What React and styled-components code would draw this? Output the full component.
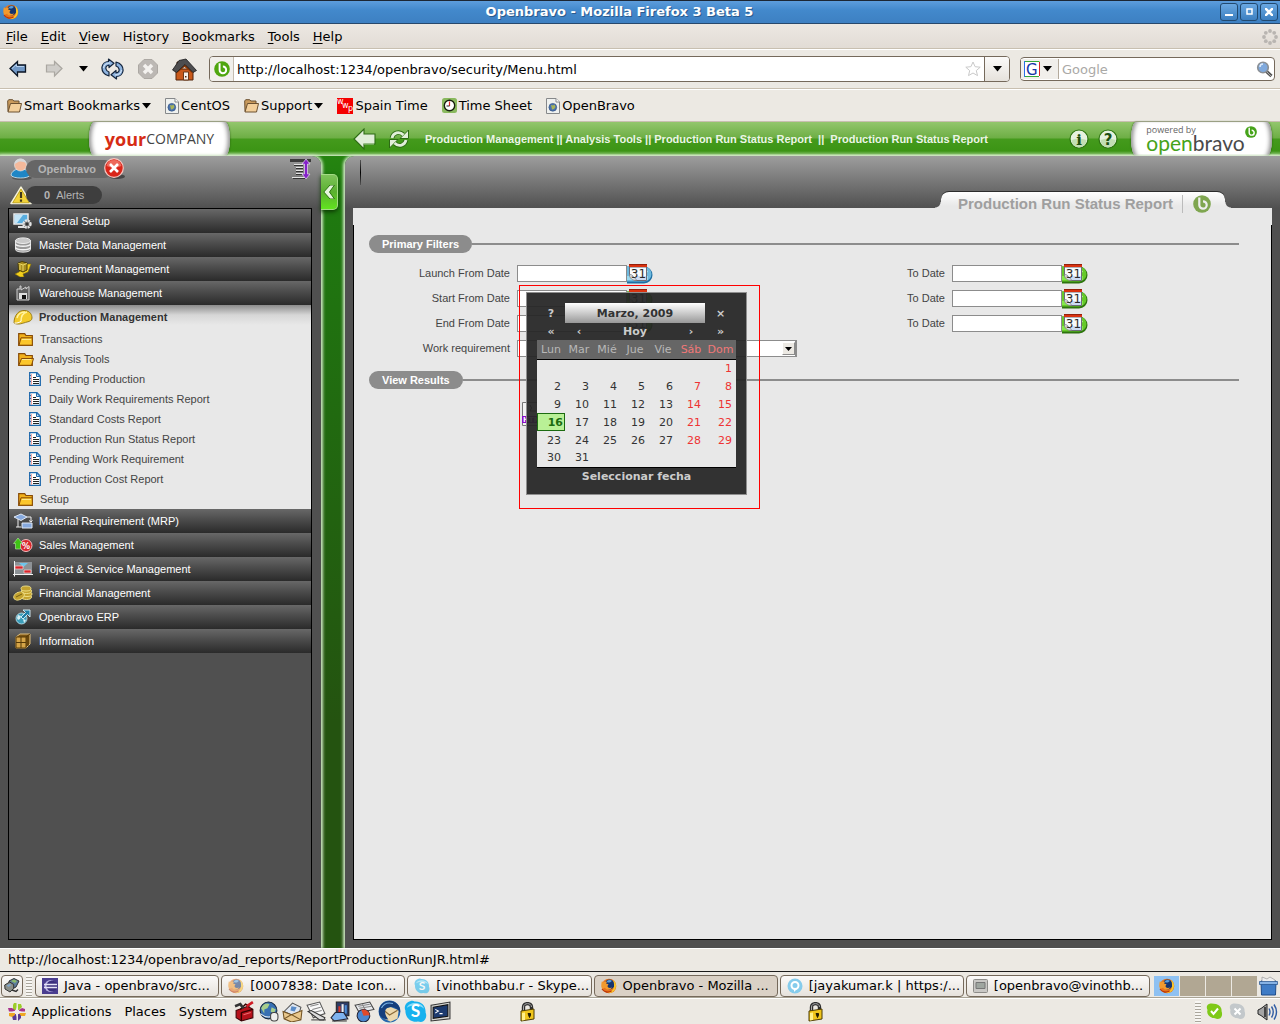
import React from "react";
import styled, { createGlobalStyle } from "styled-components";

const primaryRows = [
  { id: "launch", label: "Launch From Date", focused: true },
  { id: "start", label: "Start From Date" },
  { id: "end", label: "End From Date" },
];

const weekDays = ["Lun", "Mar", "Mié", "Jue", "Vie", "Sáb", "Dom"];
const weeks = [
  ["", "", "", "", "", "", 1],
  [2, 3, 4, 5, 6, 7, 8],
  [9, 10, 11, 12, 13, 14, 15],
  [16, 17, 18, 19, 20, 21, 22],
  [23, 24, 25, 26, 27, 28, 29],
  [30, 31, "", "", "", "", ""],
];

/* ---------- icons ---------- */

const Svg = styled.svg`
  display: block;
  flex: none;
`;

const Caret = () => (
  <Svg width="9" height="6" viewBox="0 0 9 6">
    <path d="M0 0h9L4.500 5.500z" fill="#000" />
  </Svg>
);

const Firefox = ({ size = 16, faded }) => (
  <Svg width={size} height={size} viewBox="0 0 16 16" opacity={faded ? 0.55 : 1}>
    <circle cx="8" cy="8" r="7.300" fill="#e8731a" />
    <circle cx="8.500" cy="6.500" r="5" fill="#16356f" />
    <path d="M6 3c2-1.500 4-1 5 0-1 .2-1 1.500-2.500 1.500S6 5 6 3z" fill="#5aa0dc" />
    <path d="M1 3c.4 1 1 1.200 1.600 1.300C3.500 3.400 5 3.300 6 4L5 5.500l2.500.8L6.500 8c0 2 3 2.500 4.500 1.200-1 3-5.500 3.200-7 .5L1 11C0 8 .2 5 1 3z" fill="#f29a2e" />
    <path d="M12 2c3 2 4 6 2 9.500-1.500 3-5 4-8.500 3 5 0 8-3.500 7.500-7.500 0-2-.4-3.500-1-5z" fill="#f8c62c" />
    <path d="M1 11c2 3 6 4 9.500 2" stroke="#b8350c" strokeWidth="1.200" fill="none" />
  </Svg>
);

const BackArrow = () => (
  <Svg width="18" height="18" viewBox="0 0 18 18">
    <path d="M1 8.500L8.500 1.500V5H16.500V12H8.500v4z" fill="#7198c6" stroke="#0b1524" strokeWidth="1.300" />
    <path d="M3 8.500L7.500 4.500V6.500H15" fill="none" stroke="#b5cfec" />
  </Svg>
);

const ForwardArrow = () => (
  <Svg width="18" height="18" viewBox="0 0 18 18">
    <path d="M17 8.500L9.500 1.500V5H1.500V12h8v4z" fill="#cfcdc9" stroke="#aaa7a1" strokeWidth="1.200" />
  </Svg>
);

const Reload = () => (
  <Svg width="23" height="22" viewBox="0 0 23 22">
    <g fill="#8fb4df" stroke="#14253d" strokeWidth="1.200" strokeLinejoin="round">
      <path d="M8 18C3 17 .5 13 1 9c.4-3 3-5.500 6.500-5.500V1L13 5.200 8 9.500V7C5.500 7.500 4.500 9 5 11c.3 1.500 1.500 2.500 3 3z" />
      <path d="M15 4c5 1 7.500 5 7 9-.4 3-3 5.500-6.500 5.500V21L10 16.800 15 12.500V15c2.500-.5 3.500-2 3-4-.3-1.500-1.500-2.500-3-3z" />
    </g>
    <path d="M2.500 10C3 7 5 5 9 5M20.500 12c-.5 3-2.500 5-6.500 5" stroke="#dbe9f7" fill="none" />
  </Svg>
);

const Stop = () => (
  <Svg width="20" height="20" viewBox="0 0 20 20">
    <path d="M6 .5h8L19.500 6v8L14 19.500H6L.5 14V6z" fill="#bcb8b4" stroke="#aca8a3" />
    <path d="M6 6l8 8M14 6l-8 8" stroke="#f4f2ef" strokeWidth="3.500" />
  </Svg>
);

const Home = () => (
  <Svg width="25" height="23" viewBox="0 0 25 23">
    <path d="M4 11h17v11H4z" fill="#c9591a" stroke="#53240a" />
    <path d="M12.500 5L20 12v3l-7.500-6L5 15v-3z" fill="#8c3806" />
    <path d="M5 4h4v5H5z" fill="#a94b18" stroke="#41200c" />
    <path d="M7 2.500L14 1l10.500 11.500-3.500 2-8-8-8.500 8-4-2.500z" fill="#4d4d4f" stroke="#1c1c1d" strokeWidth=".8" />
    <path d="M11.500 14h5v8h-5z" fill="#f6f2ea" stroke="#6b3a1a" />
    <path d="M13 18h1.500v1.500H13z" fill="#53240a" />
  </Svg>
);

const BravoMark = ({ size = 18, color = "#4fa60f", hole = "#fff" }) => (
  <Svg width={size} height={size} viewBox="0 0 18 18">
    <circle cx="9" cy="9" r="8.800" fill={color} />
    <path d="M6.300 2.500v7.500a3.700 3.700 0 103.700-3.700" fill="none" stroke={hole} strokeWidth="2.200" />
  </Svg>
);

const StarIcon = () => (
  <Svg width="16" height="16" viewBox="0 0 16 16">
    <path d="M8 1l2.100 4.700 5.100.5-3.900 3.400 1.200 5L8 12l-4.500 2.600 1.200-5L.8 6.200l5.100-.5z" fill="#fff" stroke="#c9c9c9" />
  </Svg>
);

const Magnifier = () => (
  <Svg width="17" height="17" viewBox="0 0 17 17">
    <path d="M10 10l5.500 5" stroke="#555" strokeWidth="3.200" />
    <path d="M11 11l4 4" stroke="#aaa" strokeWidth="1" />
    <circle cx="7" cy="6.500" r="5.300" fill="#7fa9dd" stroke="#8b8f94" strokeWidth="1.600" />
    <path d="M4 6a3 3 0 013-3" stroke="#dceafa" strokeWidth="1.500" fill="none" />
  </Svg>
);

const GoogleG = () => (
  <Svg width="16" height="16" viewBox="0 0 16 16">
    <path d="M0 0h16v16H0z" fill="#fff" />
    <path d="M.5 0v16" stroke="#2a6fe8" />
    <path d="M1 .5h14.500M1 15.500h14" stroke="#35a83a" />
    <path d="M15.500 1v14" stroke="#d8242a" />
    <text x="2" y="13.500" fontFamily="DejaVu Sans" fontSize="15" fill="#1433a8">G</text>
  </Svg>
);

const Throbber = () => (
  <Svg width="16" height="16" viewBox="0 0 16 16" fill="#b9b5b1">
    {[[8, 2], [12.2, 3.8], [14, 8], [12.2, 12.2], [8, 14], [3.8, 12.2], [2, 8], [3.8, 3.8]].map(([x, y]) => (
      <circle key={`${x}-${y}`} cx={x} cy={y} r="1.900" />
    ))}
  </Svg>
);

const MarkFolder = () => (
  <Svg width="15" height="14" viewBox="0 0 15 14">
    <path d="M1 12.500L.7 2l1-1.300h4L6.800 2H12v3" fill="#c99a5c" stroke="#6b5030" />
    <path d="M1 13L3.500 4.500h11L12.500 13z" fill="#f3cf9a" stroke="#6b5030" strokeLinejoin="round" />
  </Svg>
);

const WebPage = () => (
  <Svg width="14" height="16" viewBox="0 0 14 16">
    <path d="M.5.5h9.500l3.500 3.500v11.500H.5z" fill="#eff1ef" stroke="#86888a" />
    <path d="M10 .5V4h3.500" fill="#fff" stroke="#86888a" />
    <circle cx="6.800" cy="9.300" r="3.900" fill="#4a72ad" stroke="#2e4c7c" strokeWidth=".6" />
    <path d="M5 7l2 .5 1.500-1 1 2.500-1.500 2-2 .5z" fill="#a9b458" />
  </Svg>
);

const SpainTime = () => (
  <Svg width="16" height="16" viewBox="0 0 16 16">
    <path d="M0 0h16v16H0z" fill="#f40000" />
    <g fill="#fff" fontFamily="DejaVu Sans" fontSize="8">
      <text x="0" y="6">w</text>
      <text x="5" y="10">w</text>
      <text x="11" y="13">p</text>
    </g>
  </Svg>
);

const ClockIcon = () => (
  <Svg width="15" height="15" viewBox="0 0 15 15">
    <rect width="15" height="15" rx="2.500" fill="#8ab95e" />
    <circle cx="7.500" cy="7.500" r="5.200" fill="#fff" stroke="#18200f" strokeWidth="1.400" />
    <path d="M7.500 3.500V8" stroke="#e02c2c" strokeWidth="1.200" />
    <path d="M4.500 8h3" stroke="#222" />
  </Svg>
);

const AppBack = () => (
  <Svg width="23" height="22" viewBox="0 0 23 22">
    <path d="M1 11L11 1v5h11v10H11v5z" fill="#e1eed9" stroke="#2d6b14" strokeWidth="1.100" />
    <path d="M11 16h10" stroke="#a9cf97" />
  </Svg>
);

const AppRefresh = () => (
  <Svg width="20" height="20" viewBox="0 0 20 20">
    <g fill="none" stroke="#2d6b14" strokeWidth="4.600">
      <path d="M3 9C4 4 10 1.500 14 5.500" />
      <path d="M17 11c-1 5-7 7.500-11 3.500" />
    </g>
    <path d="M11 9.500h8.500V1zM9 10.500H.5V19z" fill="#e1eed9" stroke="#2d6b14" />
    <g fill="none" stroke="#e1eed9" strokeWidth="2.800">
      <path d="M3 9C4 4 10 1.500 14.500 6" />
      <path d="M17 11c-1 5-7 7.500-11.500 3" />
    </g>
  </Svg>
);

const RoundGlyph = ({ glyph }) => (
  <Svg width="20" height="20" viewBox="0 0 20 20">
    <circle cx="10" cy="10" r="9" fill="#e6f2df" stroke="#2d7410" strokeWidth="1.200" />
    <path d="M2.500 11a7.500 7.500 0 0015 0q-7.500-3-15 0z" fill="#c2deb3" />
    <text x="10" y="15.500" textAnchor="middle" fontFamily={glyph === "i" ? "DejaVu Serif" : "DejaVu Sans"} fontWeight="bold" fontSize="15" fill="#1d4f12">{glyph}</text>
  </Svg>
);

const UserIcon = () => (
  <Svg width="22" height="22" viewBox="0 0 22 22">
    <ellipse cx="12" cy="20" rx="10" ry="2" fill="#333" opacity=".5" />
    <path d="M1 17c1-4 4-6 9.500-6s9 2 9.500 6c-1 4-18 4-19 0z" fill="#1f86c5" stroke="#d5e8f2" strokeWidth=".8" />
    <circle cx="10.500" cy="7" r="6" fill="#f4b99b" stroke="#eee" strokeWidth=".6" />
    <path d="M4.500 6c0-7 12-7 12 0-2-3-8-3-9-1.500z" fill="#d5d8da" />
  </Svg>
);

const CloseBall = () => (
  <Svg width="22" height="22" viewBox="0 0 22 22">
    <ellipse cx="13" cy="18.500" rx="8" ry="2.500" fill="#222" opacity=".6" />
    <circle cx="10" cy="10" r="9.300" fill="#d92519" stroke="#f6c6c0" strokeWidth="1.200" />
    <path d="M2.500 8a7.700 7.700 0 0115 0q-7.500 3-15 0z" fill="#ee6a5c" />
    <path d="M6 6l8 8M14 6l-8 8" stroke="#fff" strokeWidth="2.600" />
  </Svg>
);

const WarningIcon = () => (
  <Svg width="22" height="19" viewBox="0 0 22 19">
    <path d="M11 1.200L21 17.500H1z" fill="#f4d73e" stroke="#f6f3da" strokeWidth="1.600" strokeLinejoin="round" />
    <path d="M11 3L19.300 16.800H2.700z" fill="#f2d339" stroke="#a38a18" strokeWidth=".6" />
    <path d="M11 6v6M11 13.500v2.200" stroke="#40391b" strokeWidth="2.200" />
  </Svg>
);

const TreeToggle = () => (
  <Svg width="22" height="22" viewBox="0 0 22 22">
    <path d="M0 2.500h21" stroke="#3c3c3c" strokeWidth="3" />
    <path d="M4 6.500h9M6 9.500h7M6 12.500h7M6 15.500h7M2 19.500h13" stroke="#e4e4e4" />
    <path d="M4 7.500h9M6 10.500h7M6 13.500h7M6 16.500h7M3 20.500h13" stroke="#333" />
    <path d="M16 1l4 5h-2.500v10H20l-4 5-4-5h2.500V6H12z" fill="#8420c8" stroke="#e6d8f0" strokeWidth=".7" />
  </Svg>
);

const CollapseArrow = () => (
  <Svg width="12" height="14" viewBox="0 0 12 14">
    <path d="M7 0L.8 7 7 14h4.500L6.500 7l5-7z" fill="#e5f5dc" stroke="#2c7310" />
  </Svg>
);

const FolderIcon = ({ open }) => (
  <Svg width="16" height="13" viewBox="0 0 16 13">
    <path d="M.7 12.300V.7h6L8 2.500h6.300v9.800z" fill="#f1b01b" stroke="#874b08" strokeWidth="1.200" />
    <path d={open ? "M.8 12.300L3.500 5.500h12l-2 6.800z" : "M1 12.200L3 4.800h11.300v7.400z"} fill="#fbc62c" stroke="#874b08" />
    <path d="M4 6.500h9" stroke="#ffe88a" />
  </Svg>
);

const ReportIcon = () => (
  <Svg width="12" height="14" viewBox="0 0 12 14">
    <path d="M.7.7H8l3.300 3.500v9.100H.7z" fill="#fff" stroke="#1e68ac" strokeWidth="1.300" />
    <path d="M7.500 1v3.500H11z" fill="#cfe0f2" stroke="#1e68ac" />
    <path d="M2.500 2v11" stroke="#f0a5a5" />
    <path d="M0 3.500h2M0 6.500h2M0 9.500h2" stroke="#1e68ac" />
    <path d="M4 5.500h3M4 7.500h6M4 9.500h6M4 11.500h6" stroke="#222" />
  </Svg>
);

const DateIcon = ({ blue }) => (
  <Svg width="28" height="20" viewBox="0 0 28 20">
    <path d="M0 2.500h17a8 8 0 010 17H0z" fill={blue ? "#1f6fa3" : "#2d730e"} />
    <path d="M0 2.500h17a7.300 7.300 0 010 15H0z" fill={blue ? "#6db9de" : "#66c92a"} />
    <path d="M0 12h21v4H0z" fill={blue ? "#a6e2f5" : "#8ff055"} opacity=".8" />
    <path d="M17 4a6 6 0 014 4l-3 1z" fill="#e6f6e0" opacity=".8" />
    <path d="M2.500 3h17v13.500H8l-5.500-5z" fill="#f8fafc" stroke="#6c6c78" />
    <path d="M9 12h10v4H9z" fill="#cbdcf4" />
    <path d="M2.500 10.500c3 0 4 2 4 3 1.500 0 2.500 1.500 3 3-4 0-7-2-7-6z" fill="#dfe7f0" stroke="#777" strokeWidth=".8" />
    <path d="M2 0h18v3H2z" fill="#d9320f" />
    <path d="M2 .5h18" stroke="#951f0a" />
    <text x="11.500" y="14" textAnchor="middle" fontFamily="DejaVu Sans" fontSize="12" fill="#2a2a2a">31</text>
  </Svg>
);

const moduleIcons = {
  setup: (
    <>
      <path d="M1 1h14v10H1z" fill="#58aee0" stroke="#ececec" strokeWidth="1.500" />
      <path d="M2 2h8L4 10H2z" fill="#c5e6f8" />
      <path d="M5 14h7" stroke="#ddd" strokeWidth="2" />
      <circle cx="14" cy="11" r="3.500" fill="#777" stroke="#e4e4e4" strokeWidth="2.400" strokeDasharray="2 .8" />
      <circle cx="14" cy="11" r="1.500" fill="#333" />
    </>
  ),
  data: (
    <>
      <path d="M2.500 3.500v9c0 3.500 15 3.500 15 0v-9z" fill="#9a9a9a" stroke="#e2e2e2" />
      <ellipse cx="10" cy="3.700" rx="7.500" ry="2.800" fill="#c9c9c9" stroke="#eee" />
      <path d="M2.500 7c1 3 14 3 15 0M2.500 10.500c1 3 14 3 15 0" fill="none" stroke="#f3f3f3" strokeWidth="1.300" />
    </>
  ),
  procurement: (
    <>
      <path d="M13 3h5l-3 8-5 2 1 3H7l-5-3 4-2z" fill="#f3cf1c" stroke="#806c0a" strokeWidth=".6" />
      <path d="M5 2l4-1.500L14 2v7L10 11 5.500 9z" fill="#a88d1e" stroke="#493d0a" />
      <path d="M5.500 2.500l4.500 1.500 4-1.500M10 4v6M7 4v5" stroke="#ead764" fill="none" />
    </>
  ),
  warehouse: (
    <>
      <path d="M4 15V4h3V1h1v4l5-3v2l3-2.500V15z" fill="#5f5f5f" stroke="#cfcfcf" />
      <path d="M6 8h8v6H6z" fill="#dedede" />
      <path d="M9 10h4v4H9z" fill="#111" />
    </>
  ),
  production: (
    <>
      <path d="M1 14C1 6 6 .8 12 1.500c5 .5 7 4 7 7.500 0 2-2 3.500-5 4-4 1-9 3.500-13 1z" fill="#f3cb2b" stroke="#917410" strokeWidth=".9" />
      <path d="M4 9c1-4 4-6 8-6M8 12C8 7 10 4 14 3" stroke="#fff2a0" strokeWidth="1.500" fill="none" />
      <path d="M1.500 14c2 .5 5-.5 7-2" stroke="#fff" fill="none" />
    </>
  ),
  material: (
    <>
      <path d="M1 4l7-3 6 3-6 3.500z" fill="#86a9de" stroke="#e1e9f5" />
      <path d="M5 6v8H3m2 0h3M14 4h4v5m-2-1.500L18 9l1.500-1.500" stroke="#eee" fill="none" />
      <path d="M9 10h10v5H9z" fill="#86a9de" stroke="#e1e9f5" />
    </>
  ),
  sales: (
    <>
      <circle cx="13" cy="8.500" r="6" fill="#d9262c" stroke="#f3bfc0" />
      <path d="M5 1l4.500 5.500H7.500V12h-5V6.500H.5z" fill="#3fc315" stroke="#b9eaa6" strokeWidth=".6" />
      <text x="13" y="12" textAnchor="middle" fontFamily="DejaVu Sans" fontWeight="bold" fontSize="8" fill="#fff">%</text>
    </>
  ),
  project: (
    <>
      <path d="M1 1h18v13H1z" fill="#8d9296" />
      <path d="M6 2h9l-4.500 4z" fill="#6fc4ea" />
      <path d="M2 5h8v3H2zM11 9h7v3h-7z" fill="#d9262c" stroke="#f3d3d3" strokeWidth=".7" />
      <path d="M1.500 0v15.500M0 13.500h20" stroke="#f3f3f3" />
    </>
  ),
  financial: (
    <g fill="#c4a32f" stroke="#f2e48f" strokeWidth=".9">
      <ellipse cx="13.500" cy="12" rx="5" ry="2.500" />
      <ellipse cx="14" cy="9" rx="5" ry="2.500" />
      <ellipse cx="13.500" cy="6" rx="5" ry="2.500" />
      <ellipse cx="13" cy="3.500" rx="5" ry="2.500" />
      <ellipse cx="6" cy="11" rx="5.500" ry="3.800" transform="rotate(-25 6 11)" />
      <path d="M3 12l6-3" stroke="#6b5610" />
    </g>
  ),
  erp: (
    <>
      <circle cx="8.500" cy="9.500" r="5.500" fill="#3b9db9" stroke="#c7e9f2" strokeWidth=".8" />
      <path d="M5 6l3 1-1 3-2 1-1-2zM10 10l3 1-2 3z" fill="#d9f0f5" />
      <path d="M10 1h7v7l-2.500-2.500L10 10 8 8l4.500-4.500z" fill="#1f7ea6" stroke="#dcf3fb" strokeWidth=".9" />
    </>
  ),
  info: (
    <>
      <path d="M3 4l4-3h10v10l-4 4H3z" fill="#7c5513" stroke="#e4c27e" />
      <path d="M3 4h10v11H3z" fill="#d6a548" stroke="#543806" />
      <path d="M8 4v11M3 9.500h10M13 4l4-3M15 3v10" stroke="#543806" fill="none" />
    </>
  ),
};

const ModuleIcon = ({ name }) => (
  <Svg width="20" height="16" viewBox="0 0 20 16">
    {moduleIcons[name]}
  </Svg>
);

const SkypeIcon = ({ size = 23, faded }) => (
  <Svg width={size} height={size} viewBox="0 0 24 24" opacity={faded ? 0.55 : 1}>
    <path d="M7 1c2-.5 3 0 4 .5C18 1 23 6 22.500 13c1.500 3 .5 7-2 9-2 1.500-4 1-6 .5C7 24 1 18 1.500 11-.5 7 2 2 7 1z" fill="#18b2ee" />
    <path d="M3 8C5 2 18 1 21 9 16 5 8 5 3 8z" fill="#8adcf8" />
    <text x="12" y="18" textAnchor="middle" fontFamily="Lato" fontWeight="bold" fontSize="18" fill="#fff">S</text>
  </Svg>
);

const EclipseIcon = () => (
  <Svg width="16" height="16" viewBox="0 0 16 16">
    <path d="M0 0h16v16H0z" fill="#4a3d8f" />
    <circle cx="8.500" cy="8" r="6" fill="#b8b2e2" />
    <circle cx="10" cy="8" r="5.500" fill="#3a2e7d" />
    <path d="M2 6.500h13M2 9.500h13" stroke="#e5e3f6" strokeWidth="1.500" />
  </Svg>
);

const ChatIcon = () => (
  <Svg width="16" height="16" viewBox="0 0 16 16">
    <circle cx="8" cy="8" r="7.500" fill="#86ccec" />
    <circle cx="8" cy="7.500" r="3.500" fill="none" stroke="#fff" strokeWidth="2" />
    <path d="M7 11h3l-3 3z" fill="#fff" />
  </Svg>
);

const TermFaded = () => (
  <Svg width="15" height="14" viewBox="0 0 15 14">
    <rect x=".5" y=".5" width="14" height="13" rx="1" fill="#c9c8c5" stroke="#8d8c89" />
    <path d="M3 3.500h9v6H3z" fill="#9fa6a0" stroke="#777" />
  </Svg>
);

const DesktopIcon = () => (
  <Svg width="16" height="15" viewBox="0 0 16 15">
    <path d="M5 3l5-2.500 5 2.500-3 6-6 3z" fill="#5d7d9c" stroke="#333" />
    <path d="M7 3l3-1.500 3 1.500-2 2z" fill="#8cba6a" />
    <path d="M.7 7l5-3 4 2.500v4L6 14l-5-3z" fill="#8a8f88" stroke="#333" />
    <path d="M2.500 7.500l3-1.500 2 1-3 2z" fill="#83a7cc" />
    <path d="M8 12l4 1.500 2-2" stroke="#333" strokeWidth="1.500" fill="none" />
  </Svg>
);

const CentosIcon = () => (
  <Svg width="18" height="18" viewBox="0 0 18 18">
    <path d="M6 0h2.500v7H5V2zM10 1h3l1 3-3 3h-1z" fill="#9ccd2a" />
    <path d="M4 13l3-2h1.500v6H5zM10 11h3v4l-3 3z" fill="#5a3a96" />
    <path d="M0 5h4l3 2v1.500H1zM11 7l3-2 3 1v2.500h-6z" fill="#a8328c" />
    <path d="M1 10h6v2l-3 2-3-1zM11 10h7l-1 3h-4z" fill="#efa724" />
    <path d="M9 4l1.500 3.500L14 9l-3.500 1.500L9 14l-1.500-3.500L4 9l3.500-1.500z" fill="#f3e9ef" />
  </Svg>
);

const launchers = {
  toolbox: (
    <>
      <path d="M2 9l11-4 5 3v8L7 19l-5-3z" fill="#b5121b" stroke="#3d0508" />
      <path d="M7 11l11-3M7 11v8M6 8l5-5 4 2" stroke="#300" strokeWidth="1.300" fill="none" />
      <path d="M1 5l5-2 3 4" stroke="#333" strokeWidth="2.500" fill="none" />
      <path d="M12 5l6-4" stroke="#d11b24" strokeWidth="2.500" />
      <path d="M9 13l7-2" stroke="#f06a70" />
    </>
  ),
  globe: (
    <>
      <circle cx="10" cy="9" r="8" fill="#3870b2" stroke="#16283e" />
      <path d="M3 7c2-5 6-5 8-4l-2 4-3 1v4zM13 6l4 2-2 4-3-2z" fill="#a8ce8b" />
      <path d="M2 12c5 4 11 4 16 0" stroke="#e5ecf3" fill="none" />
      <rect x="12" y="11" width="7" height="8" rx="3" fill="#f0f0ee" stroke="#444" />
    </>
  ),
  mail: (
    <>
      <path d="M2 10l8-8 8 4-3 10z" fill="#dfe7f1" stroke="#555" />
      <path d="M9 5l5 1-2 4-4-1z" fill="#5b8cc7" />
      <path d="M1 10l8 3 10-4-1 9-9 2-7-3z" fill="#e9c88c" stroke="#715222" />
      <path d="M2 17l7-4 9 5" stroke="#715222" fill="none" />
    </>
  ),
  writer: (
    <>
      <path d="M1 4l12-3 5 11-11 4z" fill="#fafafa" stroke="#555" />
      <path d="M4 5l8-2M6 8l8-2M7 11l8-2" stroke="#888" />
      <path d="M2 10l3-1 13 7-1 2-4 0z" fill="#ddd" stroke="#333" />
      <path d="M5 18h14" stroke="#444" />
    </>
  ),
  impress: (
    <>
      <path d="M6 1h12v13H6z" fill="#2e3c66" stroke="#222" />
      <path d="M8 5h2v7H8z" fill="#d8362b" />
      <path d="M11 3h2v9h-2z" fill="#eee" />
      <path d="M14 4h2v8h-2z" fill="#4d8ed8" />
      <path d="M5 11l8 0 4 6-13 2-3-3z" fill="#7eb2ef" stroke="#223" />
      <path d="M2 19h14" stroke="#333" />
    </>
  ),
  calc: (
    <>
      <path d="M1 4l14-3 4 7-14 3z" fill="#e9ebee" stroke="#444" />
      <path d="M4 5l11-2M5 7l12-2M8 3l3 6" stroke="#888" />
      <circle cx="9" cy="14" r="6" fill="#4a86cf" stroke="#223" />
      <path d="M9 14L7 8.500a6 6 0 018 5z" fill="#e04a2a" />
    </>
  ),
  thunderbird: (
    <>
      <circle cx="10" cy="10" r="9.500" fill="#2467ae" />
      <path d="M4 8l7-2 7 3-1 7-6 3-6-3z" fill="#ecd9ad" />
      <path d="M4 8l6 5 7-4" stroke="#8a6a38" fill="none" />
      <path d="M1 12C0 4 6 0 12 1c5 1 8 5 7 10-2-5-8-6-11-4s-2 6 1 10c-4 0-7-2-8-5z" fill="#163f7c" />
      <path d="M3 7c2-4 6-5 10-4" stroke="#78b4e8" fill="none" />
    </>
  ),
  terminal: (
    <>
      <path d="M1 4l18-3v16L1 19z" fill="#d4d4cf" stroke="#333" />
      <path d="M3 6l14-2.500v11L3 16.500z" fill="#1c3a6e" stroke="#111" />
      <path d="M5 8l3 1.500-3 2M9 12h3" stroke="#fff" fill="none" />
    </>
  ),
};

const LauncherIcon = ({ name, size = 21 }) => (
  <Svg width={size} height={size} viewBox="0 0 20 20">
    {launchers[name]}
  </Svg>
);

const LockIcon = () => (
  <Svg width="15" height="20" viewBox="0 0 15 20">
    <path d="M3.500 10V5c0-4.500 8-4.500 8 0v5" fill="none" stroke="#2e2e2e" strokeWidth="3.400" />
    <path d="M3.500 10V5c0-4.500 8-4.500 8 0" fill="none" stroke="#aaa" />
    <path d="M1 9l13-2v10L1 19z" fill="#f0c51c" stroke="#4d3c03" />
    <path d="M2 11l3-.5V18l-3 .4z" fill="#fff08a" />
    <path d="M8 11.500h2.500V13L9.500 15.500z" fill="#221b02" stroke="#221b02" />
  </Svg>
);

const StatusBlob = ({ on }) => (
  <Svg width="17" height="17" viewBox="0 0 17 17">
    <path d="M3 1c3-1 5 0 7 0 4 1 6 4 5.500 7 1.500 4 0 8-4 8-2-.5-3-1-5-1C2 13 .5 10 1.500 7 0 4 1 2 3 1z" fill={on ? "#7fc918" : "#c3c8cb"} />
    {on ? (
      <path d="M5 8l2.500 3L12 5.500" stroke="#fff" strokeWidth="2" fill="none" />
    ) : (
      <path d="M5.500 5.500l6 6M11.500 5.500l-6 6" stroke="#fff" strokeWidth="2" />
    )}
  </Svg>
);

const Speaker = () => (
  <Svg width="21" height="18" viewBox="0 0 21 18">
    <path d="M1 7l3-1.500L10 1v16l-6-4.500L1 11z" fill="#a5a5a5" stroke="#222" />
    <path d="M8 4v10" stroke="#444" strokeWidth="2" />
    <path d="M12 5.500q2 3.500 0 7M14.500 3.500q3.500 5.500 0 11M17 1.500q5 7.500 0 15" stroke="#2f5ca3" strokeWidth="1.400" fill="none" />
  </Svg>
);

const TrashIcon = () => (
  <Svg width="19" height="20" viewBox="0 0 19 20">
    <path d="M2 5h15l-.5 14h-14z" fill="#3f7cc6" stroke="#1f4d8a" />
    <path d="M3 1l5 2 3-2 5 3v3H3z" fill="#eee" stroke="#999" strokeWidth=".7" />
    <path d="M.5 5.500h18v3H.5z" fill="#86b2e4" stroke="#1f4d8a" strokeWidth=".7" />
  </Svg>
);

/* ---------- page ---------- */

const modulesTop = [
  ["setup", "General Setup"],
  ["data", "Master Data Management"],
  ["procurement", "Procurement Management"],
  ["warehouse", "Warehouse Management"],
];

const reports = [
  "Pending Production",
  "Daily Work Requirements Report",
  "Standard Costs Report",
  "Production Run Status Report",
  "Pending Work Requirement",
  "Production Cost Report",
];

const modulesBottom = [
  ["material", "Material Requirement (MRP)"],
  ["sales", "Sales Management"],
  ["project", "Project & Service Management"],
  ["financial", "Financial Management"],
  ["erp", "Openbravo ERP"],
  ["info", "Information"],
];

function BrowserTop() {
  return (
    <>
      <TitleBar>
        <Firefox />
        <WindowTitle>Openbravo - Mozilla Firefox 3 Beta 5</WindowTitle>
        <WindowButton aria-label="Minimize">
          <Svg width="8" height="8"><path d="M0 7h8" stroke="#fff" strokeWidth="2" /></Svg>
        </WindowButton>
        <WindowButton aria-label="Maximize">
          <Svg width="8" height="8"><path d="M2 1h5v5H2z" stroke="#fff" strokeWidth="1.500" fill="none" /></Svg>
        </WindowButton>
        <WindowButton aria-label="Close">
          <Svg width="8" height="8"><path d="M0 0l8 8M8 0L0 8" stroke="#fff" strokeWidth="2.500" /></Svg>
        </WindowButton>
      </TitleBar>
      <MenuBar>
        <MenuButton><u>F</u>ile</MenuButton>
        <MenuButton><u>E</u>dit</MenuButton>
        <MenuButton><u>V</u>iew</MenuButton>
        <MenuButton>Hi<u>s</u>tory</MenuButton>
        <MenuButton><u>B</u>ookmarks</MenuButton>
        <MenuButton><u>T</u>ools</MenuButton>
        <MenuButton><u>H</u>elp</MenuButton>
        <Spacer />
        <Throbber />
      </MenuBar>
      <NavBar>
        <NavButton aria-label="Back"><BackArrow /></NavButton>
        <NavButton aria-label="Forward"><ForwardArrow /></NavButton>
        <NavButton $narrow aria-label="Recent pages"><Caret /></NavButton>
        <NavButton aria-label="Reload"><Reload /></NavButton>
        <NavButton aria-label="Stop"><Stop /></NavButton>
        <NavButton aria-label="Home"><Home /></NavButton>
        <UrlBox>
          <UrlIcon><BravoMark size={16} /></UrlIcon>
          <BarInput aria-label="Address" defaultValue="http://localhost:1234/openbravo/security/Menu.html" />
          <StarIcon />
          <UrlDrop aria-label="History list"><Caret /></UrlDrop>
        </UrlBox>
        <SearchBox>
          <SearchEngine aria-label="Search engine"><GoogleG /><Caret /></SearchEngine>
          <BarInput aria-label="Search" placeholder="Google" />
          <Magnifier />
        </SearchBox>
      </NavBar>
      <BookmarkBar>
        <Bookmark href="#"><MarkFolder />Smart Bookmarks<Caret /></Bookmark>
        <Bookmark href="#"><WebPage />CentOS</Bookmark>
        <Bookmark href="#"><MarkFolder />Support<Caret /></Bookmark>
        <Bookmark href="#"><SpainTime />Spain Time</Bookmark>
        <Bookmark href="#"><ClockIcon />Time Sheet</Bookmark>
        <Bookmark href="#"><WebPage />OpenBravo</Bookmark>
      </BookmarkBar>
    </>
  );
}

function Sidebar() {
  return (
    <Side>
      <SideTop>
        <UserRow>
          <UserIcon />
          <Pill $bold>Openbravo</Pill>
          <Overlap><IconButton aria-label="Log out"><CloseBall /></IconButton></Overlap>
          <Spacer />
          <IconButton aria-label="Expand menu"><TreeToggle /></IconButton>
        </UserRow>
        <UserRow>
          <WarningIcon />
          <Pill $dark><b>0</b>Alerts</Pill>
        </UserRow>
      </SideTop>
      <MenuBox>
        {modulesTop.map(([icon, label]) => (
          <ModuleButton key={icon}><ModuleIcon name={icon} />{label}</ModuleButton>
        ))}
        <ModuleButton $active><ModuleIcon name="production" />Production Management</ModuleButton>
        <SubMenu>
          <SubLink href="#"><FolderIcon />Transactions</SubLink>
          <SubLink href="#"><FolderIcon open />Analysis Tools</SubLink>
          {reports.map((r) => (
            <SubLink href="#" key={r} $deep><ReportIcon />{r}</SubLink>
          ))}
          <SubLink href="#"><FolderIcon />Setup</SubLink>
        </SubMenu>
        {modulesBottom.map(([icon, label]) => (
          <ModuleButton key={icon}><ModuleIcon name={icon} />{label}</ModuleButton>
        ))}
      </MenuBox>
    </Side>
  );
}

function Calendar() {
  return (
    <CalendarFrame>
      <CalendarPanel>
        <CalTable>
          <colgroup>
            <col /><col /><col /><col /><col /><col />
            <LastCol />
          </colgroup>
          <thead>
            <tr>
              <CalHead><CalButton>?</CalButton></CalHead>
              <CalTitle colSpan="5">Marzo, 2009</CalTitle>
              <CalHead><CalButton>×</CalButton></CalHead>
            </tr>
            <NavRow>
              <CalHead><CalButton>«</CalButton></CalHead>
              <CalHead><CalButton>‹</CalButton></CalHead>
              <CalHead colSpan="3"><CalButton>Hoy</CalButton></CalHead>
              <CalHead><CalButton>›</CalButton></CalHead>
              <CalHead><CalButton>»</CalButton></CalHead>
            </NavRow>
            <tr>
              {weekDays.map((d, i) => (
                <DayName key={d} $weekend={i > 4}>{d}</DayName>
              ))}
            </tr>
          </thead>
          <tbody>
            {weeks.map((week, w) => (
              <tr key={w}>
                {week.map((d, i) => (
                  <Day key={i} $weekend={i > 4} $today={d === 16}>{d}</Day>
                ))}
              </tr>
            ))}
          </tbody>
          <tfoot>
            <tr>
              <CalFoot colSpan="7">Seleccionar fecha</CalFoot>
            </tr>
          </tfoot>
        </CalTable>
      </CalendarPanel>
    </CalendarFrame>
  );
}

function Workspace() {
  return (
    <Main>
      <ToolBar>
        <ToolDivider />
        <Spacer />
        <Tab>
          <TabText>Production Run Status Report</TabText>
          <BravoMark color="#7fa650" hole="#eee" />
        </Tab>
      </ToolBar>
      <Content>
        <Section><SectionPill>Primary Filters</SectionPill></Section>
        <FormGrid>
          {primaryRows.map(({ id, label, focused }) => (
            <React.Fragment key={id}>
              <Field>
                <label htmlFor={`${id}-from`}>{label}</label>
                <DateBox>
                  <DateInput id={`${id}-from`} />
                  <IconButton aria-label={`Pick ${label}`}><DateIcon blue={focused} /></IconButton>
                  {focused && <Calendar />}
                </DateBox>
              </Field>
              <Field>
                <label htmlFor={`${id}-to`}>To Date</label>
                <DateBox>
                  <DateInput id={`${id}-to`} />
                  <IconButton aria-label="Pick To Date"><DateIcon /></IconButton>
                </DateBox>
              </Field>
            </React.Fragment>
          ))}
          <Field>
            <label htmlFor="work">Work requirement</label>
            <SelectBox>
              <Select id="work" />
              <SelectArrow>
                <Svg width="7" height="4"><path d="M0 0h7L3.500 4z" /></Svg>
              </SelectArrow>
            </SelectBox>
          </Field>
        </FormGrid>
        <Section><SectionPill>View Results</SectionPill></Section>
        <HtmlButton aria-label="HTML">
          <Svg width="22" height="24" viewBox="0 0 22 24">
            <path d="M.5.5h15l5 5v18H.5z" fill="#f3f3f3" stroke="#777" />
            <path d="M8 3q3 3 0 6h6" stroke="#333" fill="none" />
            <path d="M0 14h22v7H0z" fill="#8a0cc9" />
            <text x="1" y="20" fontFamily="DejaVu Sans" fontWeight="bold" fontSize="7" fill="#fff">HTM</text>
          </Svg>
        </HtmlButton>
      </Content>
    </Main>
  );
}

function Panels() {
  return (
    <>
      <StatusBar>http://localhost:1234/openbravo/ad_reports/ReportProductionRunJR.html#</StatusBar>
      <TaskBar>
        <ShowDesktop aria-label="Show desktop"><DesktopIcon /></ShowDesktop>
        <Grip />
        <TaskList>
          <Task><EclipseIcon /><span>Java - openbravo/src...</span></Task>
          <Task><Firefox faded /><span>[0007838: Date Icon...</span></Task>
          <Task><SkypeIcon size={16} faded /><span>[vinothbabu.r - Skype...</span></Task>
          <Task $active><Firefox /><span>Openbravo - Mozilla ...</span></Task>
          <Task><ChatIcon /><span>[jayakumar.k | https:/...</span></Task>
          <Task><TermFaded /><span>[openbravo@vinothb...</span></Task>
        </TaskList>
        <Pager>
          <Desk $active><Firefox /></Desk>
          <Desk />
          <Desk />
          <Desk />
        </Pager>
        <TrashIcon />
      </TaskBar>
      <GnomePanel>
        <CentosIcon />
        <PanelButton>Applications</PanelButton>
        <PanelButton>Places</PanelButton>
        <PanelButton>System</PanelButton>
        <Launchers>
          <LauncherIcon name="toolbox" />
          <LauncherIcon name="globe" />
          <LauncherIcon name="mail" />
          <LauncherIcon name="writer" />
          <LauncherIcon name="impress" />
          <LauncherIcon name="calc" />
          <LauncherIcon name="thunderbird" size={23} />
          <SkypeIcon />
          <LauncherIcon name="terminal" />
        </Launchers>
        <PanelGap $grow={69} />
        <LockIcon />
        <PanelGap $grow={274} />
        <LockIcon />
        <PanelGap $grow={373} />
        <Grip />
        <Tray>
          <StatusBlob on />
          <StatusBlob />
          <Volume><Speaker /></Volume>
        </Tray>
      </GnomePanel>
    </>
  );
}

export default function App() {
  return (
    <Window>
      <GlobalStyle />
      <BrowserTop />
      <Page>
        <GreenBar>
          <CompanySlot>
            <LogoTab><Your>your</Your><Company>COMPANY</Company></LogoTab>
          </CompanySlot>
          <HelpIcons $wide>
            <IconButton aria-label="Go back"><AppBack /></IconButton>
            <IconButton aria-label="Refresh"><AppRefresh /></IconButton>
          </HelpIcons>
          <Breadcrumb>
            Production Management || Analysis Tools || Production Run Status Report &nbsp;||&nbsp; Production Run Status Report
          </Breadcrumb>
          <Spacer />
          <HelpIcons>
            <IconButton aria-label="About"><RoundGlyph glyph="i" /></IconButton>
            <IconButton aria-label="Help"><RoundGlyph glyph="?" /></IconButton>
          </HelpIcons>
          <LogoTab>
            <Brand>
              <Powered>powered by</Powered>
              <BrandName><span>open</span>bravo</BrandName>
            </Brand>
            <BrandMark><BravoMark size={12} color="#46a31a" /></BrandMark>
          </LogoTab>
        </GreenBar>
        <Body>
          <Sidebar />
          <Splitter>
            <CollapseButton aria-label="Hide menu"><CollapseArrow /></CollapseButton>
          </Splitter>
          <Workspace />
        </Body>
      </Page>
      <Panels />
    </Window>
  );
}

/* ---------- styles ---------- */

const GlobalStyle = createGlobalStyle`
  * {
    box-sizing: border-box;
  }
  body {
    margin: 0;
    background: #ece9e3;
  }
  button, input, select {
    font: inherit;
    color: inherit;
    margin: 0;
    padding: 0;
    border: 0;
    background: none;
  }
  a {
    color: inherit;
    text-decoration: none;
  }
`;

const Window = styled.div`
  display: flex;
  flex-direction: column;
  min-height: 100vh;
  font-family: "DejaVu Sans", sans-serif;
  font-size: 13px;
  color: #000;
`;
const Spacer = styled.div`
  flex: 1;
`;
const IconButton = styled.button`
  display: flex;
  align-items: center;
  justify-content: center;
  flex: none;
`;

const TitleBar = styled.header`
  display: flex;
  align-items: center;
  gap: 2px;
  height: 24px;
  padding: 0 2px 0 3px;
  border-top: 1px solid #1c2633;
  border-bottom: 1px solid #27486b;
  background: linear-gradient(#5d9ddc, #4389cc 40%, #3d80c2);
`;
const WindowTitle = styled.h1`
  flex: 1;
  margin: 0;
  font-size: 13px;
  line-height: 20px;
  text-align: center;
  color: #fff;
  text-shadow: 1px 1px 0 #2b5a8c;
`;
const WindowButton = styled.button`
  display: flex;
  align-items: center;
  justify-content: center;
  width: 18px;
  height: 18px;
  border: 1px solid #21496f;
  border-radius: 3px;
  background: linear-gradient(#6aa8e2, #3c7fc0);
`;
const MenuBar = styled.nav`
  display: flex;
  align-items: center;
  height: 25px;
  padding: 2px 2px 0 0;
  background: linear-gradient(#ece8e2, #e2dcd5);
  border-bottom: 1px solid #c8bfb0;
`;
const MenuButton = styled.button`
  padding: 0 7px 0 6px;
  line-height: 20px;

  u {
    text-underline-offset: 2px;
  }
`;
const NavBar = styled.div`
  display: flex;
  align-items: center;
  height: 40px;
  padding-right: 5px;
  background: #ece9e3;
  border-top: 1px solid #fff;
  border-bottom: 1px solid #c8bfb0;
`;
const NavButton = styled.button`
  display: flex;
  align-items: center;
  justify-content: center;
  width: ${(p) => (p.$narrow ? 22 : 36)}px;
  height: 30px;
`;
const UrlBox = styled.div`
  display: flex;
  align-items: center;
  flex: 1;
  height: 26px;
  margin: 0 10px 0 7px;
  background: #fff;
  border: 1px solid #75695b;
  border-radius: 4px;
  overflow: hidden;
`;
const UrlIcon = styled.span`
  display: flex;
  align-items: center;
  justify-content: center;
  width: 24px;
  height: 24px;
  background: #f1efeb;
  border-right: 1px solid #c4bcb0;
`;
const BarInput = styled.input`
  flex: 1;
  min-width: 0;
  height: 22px;
  padding: 0 3px;
  outline: none;

  &::placeholder {
    color: #aaa9a6;
    opacity: 1;
  }
`;
const UrlDrop = styled.button`
  display: flex;
  align-items: center;
  justify-content: center;
  width: 25px;
  height: 24px;
  margin-left: 3px;
  border-left: 1px solid #75695b;
  background: linear-gradient(#fbfaf9, #e6e2dc);
`;
const SearchBox = styled.div`
  display: flex;
  align-items: center;
  width: 255px;
  height: 24px;
  padding-right: 1px;
  background: #fff;
  border: 1px solid #75695b;
  border-radius: 4px;
`;
const SearchEngine = styled.button`
  display: flex;
  align-items: center;
  gap: 3px;
  width: 38px;
  height: 20px;
  padding-left: 3px;
  background: #f1efeb;
  border-right: 1px solid #b4aa9c;
`;
const BookmarkBar = styled.nav`
  display: flex;
  align-items: center;
  gap: 14px;
  height: 33px;
  padding: 0 7px;
  background: #ece9e3;
  border-top: 1px solid #fff;
  border-bottom: 1px solid #c8bfb0;
`;
const Bookmark = styled.a`
  display: flex;
  align-items: center;
  gap: 2px;
  line-height: 20px;
`;

const Page = styled.div`
  display: flex;
  flex-direction: column;
  flex: 1;
  background: linear-gradient(#2a8c10, #1f7a10 80px, #245310 600px);
  font-family: "Liberation Sans", sans-serif;
  font-size: 11px;
`;
const GreenBar = styled.header`
  display: flex;
  align-items: center;
  height: 34px;
  padding-right: 8px;
  background: linear-gradient(
    #93c66d,
    #6dae45 16px,
    #449a1c 17px,
    #3c9415 29px,
    #7dbb61 32px,
    #d2ecc6 34px
  );
`;
const CompanySlot = styled.div`
  width: 353px;
  padding-left: 89px;
`;
const LogoTab = styled.div`
  display: flex;
  justify-content: center;
  align-items: center;
  width: 141px;
  height: 34px;
  background: #fff;
  border-radius: 5px / 17px;
  box-shadow: inset 5px 0 4px -3px #8d8d8d, inset -5px 0 4px -3px #8d8d8d,
    0 0 2px #1d4a0c;
`;
const Your = styled.b`
  font: bold 18px/34px "Open Sans", sans-serif;
  color: #d62c14;
`;
const Company = styled.span`
  font: 14px/34px "Open Sans", sans-serif;
  color: #444;
`;
const Breadcrumb = styled.div`
  font-weight: bold;
  line-height: 34px;
  white-space: nowrap;
  color: #ecf5e6;
`;
const HelpIcons = styled.div`
  display: flex;
  align-items: center;
  gap: ${(p) => (p.$wide ? 13 : 9)}px;
  margin-right: ${(p) => (p.$wide ? 16 : 13)}px;
`;
const Brand = styled.div`
  display: flex;
  flex-direction: column;
  align-self: flex-start;
  padding-top: 2px;
`;
const Powered = styled.span`
  font: 9px/12px "Open Sans", sans-serif;
  color: #666;
`;
const BrandName = styled.span`
  font: 21px/14px Lato, sans-serif;
  color: #4a4a4a;

  span {
    color: #46a31a;
  }
`;
const BrandMark = styled.span`
  align-self: flex-start;
  padding-top: 4px;
`;

const Body = styled.div`
  display: grid;
  grid-template-columns: 321px 24px 1fr;
  flex: 1;
`;
const greyFade = "linear-gradient(#9d9d9d, #505050 52px)";
const Side = styled.aside`
  display: flex;
  flex-direction: column;
  padding: 0 9px 8px 8px;
  background: ${greyFade};
  border-radius: 0 9px 0 0;
  box-shadow: 1px 0 3px 1px #cfe6c4;
`;
const SideTop = styled.div`
  height: 52px;
  padding-left: 2px;
`;
const UserRow = styled.div`
  display: flex;
  align-items: center;
  height: 26px;
`;
const Pill = styled.span`
  display: flex;
  gap: 6px;
  margin-left: -6px;
  padding: 0 18px 0 ${(p) => (p.$bold ? 12 : 18)}px;
  border-radius: 9px;
  line-height: 18px;
  color: #b4b4b4;
  font-weight: ${(p) => (p.$bold ? "bold" : "normal")};
  background: ${(p) => (p.$dark ? "#3e3e3e" : "#666")};
`;
const Overlap = styled.span`
  margin-left: -10px;
`;
const MenuBox = styled.nav`
  flex: 1;
  border: 1px solid #000;
`;
const ModuleButton = styled.button`
  display: flex;
  align-items: center;
  gap: 6px;
  width: 100%;
  height: 24px;
  padding-left: 4px;
  color: ${(p) => (p.$active ? "#333" : "#fff")};
  font-weight: ${(p) => (p.$active ? "bold" : "normal")};
  background: ${(p) =>
    p.$active
      ? "linear-gradient(#8b8b8b, #d6d6d6 10px, #e8e8e8 20px)"
      : "linear-gradient(#686868, #484848 12px, #2a2a2a)"};
`;
const SubMenu = styled.div`
  background: #e8e8e8;
`;
const SubLink = styled.a`
  display: flex;
  align-items: center;
  gap: ${(p) => (p.$deep ? 8 : 6)}px;
  height: 20px;
  padding-left: ${(p) => (p.$deep ? 20 : 9)}px;
  color: #444;
`;
const Splitter = styled.div`
  padding-top: 18px;
`;
const CollapseButton = styled.button`
  display: flex;
  align-items: center;
  justify-content: center;
  width: 17px;
  height: 36px;
  border: 1px solid #a5dd86;
  border-left: 0;
  border-radius: 0 5px 5px 0;
  background: linear-gradient(#7fc45b, #5ab02f 50%, #62e41f);
  box-shadow: 0 2px 4px #0d3a04;
`;

const Main = styled.main`
  display: flex;
  flex-direction: column;
  min-width: 0;
  padding: 0 8px 8px;
  background: ${greyFade};
  border-radius: 9px 0 0 0;
  box-shadow: -1px 0 3px 1px #cfe6c4;
  clip-path: inset(-2px 0 0 -5px);
`;
const ToolBar = styled.div`
  display: flex;
  height: 52px;
  padding: 4px 47px 0 7px;
`;
const ToolDivider = styled.div`
  width: 1px;
  height: 25px;
  background: linear-gradient(#555, #000, #555);
`;
const Tab = styled.div`
  position: relative;
  display: flex;
  align-items: center;
  gap: 10px;
  height: 26px;
  margin-top: 31px;
  padding: 0 14px 2px 17px;
  background: linear-gradient(#fff, #e8e8e8 14px);
  border-top: 1px solid #2c2c2c;
  border-radius: 8px 8px 0 0;

  /* flared feet where the tab meets the page */
  &:before,
  &:after {
    content: "";
    position: absolute;
    bottom: 9px;
    width: 6px;
    height: 6px;
  }
  &:before {
    right: 100%;
    background: radial-gradient(circle at 0 0, transparent 5px, #e8e8e8 6px);
  }
  &:after {
    left: 100%;
    background: radial-gradient(circle at 100% 0, transparent 5px, #e8e8e8 6px);
  }
`;
const TabText = styled.h2`
  margin: 0;
  padding-right: 9px;
  border-right: 1px solid #bbb;
  font-size: 15px;
  line-height: 18px;
  color: #9f9f9f;
`;
const Content = styled.div`
  flex: 1;
  padding: 27px 33px 0 16px;
  background: linear-gradient(#000, #000) 0 17px / 1px 100% no-repeat,
    linear-gradient(#000, #000) 100% 17px / 1px 100% no-repeat,
    linear-gradient(#000, #000) 0 100% / 100% 1px no-repeat, #e8e8e8;
`;
const Section = styled.div`
  display: flex;
  align-items: center;

  &:after {
    content: "";
    flex: 1;
    height: 2px;
    background: #8c8c8c;
  }
`;
const SectionPill = styled.h3`
  margin: 0;
  padding: 0 13px;
  border-radius: 9px;
  font-size: 11px;
  line-height: 18px;
  color: #fff;
  background: #8c8c8c;
`;
const FormGrid = styled.div`
  display: grid;
  grid-template-columns: 1fr 1fr;
  grid-auto-rows: 25px;
  padding: 8px 0 10px;
`;
const Field = styled.div`
  display: flex;
  align-items: center;
  gap: 7px;
  color: #444;

  label {
    width: 141px;
    padding-bottom: 2px;
    text-align: right;
  }
`;
const DateBox = styled.div`
  position: relative;
  display: flex;
  align-items: center;
  height: 17px;
`;
const DateInput = styled.input`
  width: 110px;
  height: 17px;
  background: #fff;
  border: 1px solid #8c8c8c;
`;
const SelectBox = styled.div`
  position: relative;
  width: 280px;
`;
const Select = styled.select`
  display: block;
  width: 100%;
  height: 17px;
  appearance: none;
  background: #fff;
  border: 1px solid #8c8c8c;
  border-width: 1px 2px 1px 1px;
  border-radius: 0;
`;
const SelectArrow = styled.span`
  position: absolute;
  top: 2px;
  right: 2px;
  display: flex;
  align-items: center;
  justify-content: center;
  width: 13px;
  height: 13px;
  background: #ece9e3;
  border: 1px solid #8c8c8c;
  border-top-color: #fff;
  border-left-color: #fff;
  pointer-events: none;
`;
const HtmlButton = styled.button`
  display: block;
  margin: 13px 0 0 153px;
`;

const CalendarFrame = styled.div`
  position: absolute;
  z-index: 2;
  top: 20px;
  left: 2px;
  padding: 6px 12px 13px 6px;
  border: 1px solid #f00;
`;
const CalendarPanel = styled.div`
  width: 221px;
  height: 203px;
  padding: 10px 10px 0;
  border: 1px solid #8f8f8f;
  background: rgba(38, 38, 38, 0.94);
  font-family: "DejaVu Sans", sans-serif;
`;
const CalTable = styled.table`
  width: 199px;
  table-layout: fixed;
  border-collapse: collapse;

  th,
  td {
    padding: 0;
  }
  thead {
    border-bottom: 1px solid #000;
  }
  tfoot {
    border-top: 1px solid #000;
  }
`;
const LastCol = styled.col`
  width: 31px;
`;
const NavRow = styled.tr`
  height: 17px;
`;
const CalHead = styled.td`
  text-align: center;
  font-weight: bold;
  color: #ccc;
`;
const CalButton = styled.button`
  display: block;
  width: 100%;
  line-height: 17px;
`;
const CalTitle = styled.th`
  height: 20px;
  color: #333;
  background: linear-gradient(#fff, #ccc 50%, #989898);
`;
const DayName = styled.th`
  height: 19px;
  font-weight: normal;
  color: ${(p) => (p.$weekend ? "#f07878" : "#b8b8b8")};
  background: #666;
`;
const Day = styled.td`
  height: 18px;
  text-align: right;
  background: ${(p) => (p.$today ? "#b9f096" : "#e8e8e8")};
  color: ${(p) => (p.$today ? "#1c6b10" : p.$weekend ? "#e33" : "#333")};
  font-weight: ${(p) => (p.$today ? "bold" : "normal")};
  box-shadow: ${(p) => (p.$today ? "inset 0 0 0 1px #1c6b10" : "none")};

  tr > && {
    padding-right: ${(p) => (p.$today ? 2 : 4)}px;
  }
`;
const CalFoot = styled.td`
  height: 18px;
  text-align: center;
  font-weight: bold;
  color: #ccc;
`;

const StatusBar = styled.footer`
  height: 24px;
  padding-left: 8px;
  line-height: 22px;
  background: #ece9e3;
  border-top: 1px solid #fff;
  border-bottom: 1px solid #1b1b1b;
`;
const TaskBar = styled.div`
  display: flex;
  align-items: center;
  gap: 2px;
  height: 26px;
  padding: 2px 2px 0 1px;
  background: #ece9e3;
  border-bottom: 1px solid #a9a496;
`;
const ShowDesktop = styled.button`
  display: flex;
  align-items: center;
  justify-content: center;
  width: 22px;
  height: 22px;
  border: 1px solid #75695b;
  border-radius: 4px;
  background: linear-gradient(#fbfaf9, #e6e2dc);
`;
const Grip = styled.div`
  width: 6px;
  height: 22px;
  margin: 0 1px;
  background: repeating-linear-gradient(#f7f6f3 0 2px, #aaa69c 2px 3px);
`;
const TaskList = styled.div`
  display: grid;
  grid-template-columns: repeat(6, minmax(0, 1fr));
  gap: 2px;
  flex: 1;
  min-width: 0;
`;
const Task = styled.button`
  display: flex;
  align-items: center;
  gap: 6px;
  height: 22px;
  padding: 0 4px 0 6px;
  overflow: hidden;
  white-space: nowrap;
  border: 1px solid #75695b;
  border-radius: 4px;
  background: ${(p) =>
    p.$active ? "#dad1c6" : "linear-gradient(#fbfaf9, #e6e2dc)"};
`;
const Pager = styled.div`
  display: flex;
  gap: 1px;
  margin-left: 2px;
`;
const Desk = styled.div`
  display: flex;
  align-items: center;
  justify-content: center;
  width: 25px;
  height: 20px;
  background: ${(p) => (p.$active ? "#8ec1f2" : "#b1a793")};
`;
const GnomePanel = styled.nav`
  display: flex;
  align-items: center;
  height: 26px;
  padding: 0 2px 0 8px;
  background: #ece9e3;
  border-top: 1px solid #fff;
`;
const PanelButton = styled.button`
  padding: 0 7px 0 6px;
  line-height: 20px;
`;
const Launchers = styled.div`
  display: flex;
  align-items: center;
  gap: 3px;
`;
const PanelGap = styled.div`
  flex: ${(p) => p.$grow} 1 0;
`;
const Tray = styled.div`
  display: flex;
  align-items: center;
  gap: 6px;
  margin-left: 4px;
`;
const Volume = styled.span`
  margin-left: 5px;
`;
